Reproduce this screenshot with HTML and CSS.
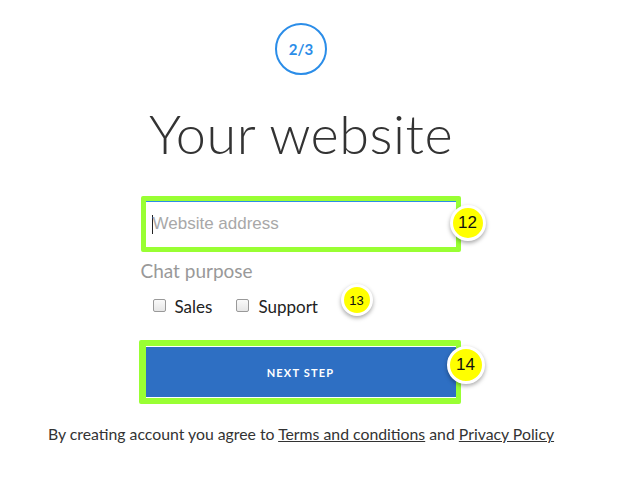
FILE: index.html
```html
<!DOCTYPE html>
<html>
<head>
<meta charset="utf-8">
<link rel="stylesheet" href="styles.css">
</head>
<body>
<div class="page">
  <div class="step">2/3</div>
  <h1 class="title">Your website</h1>
  <div class="form">
    <div class="field-wrap">
      <div class="field"><span class="caret"></span><span class="placeholder">Website address</span></div>
      <span class="badge b12">12</span>
    </div>
    <div class="label">Chat purpose</div>
    <div class="checks">
      <label class="check"><span class="box"></span>Sales</label>
      <label class="check"><span class="box"></span>Support</label>
      <span class="badge b13">13</span>
    </div>
    <div class="btn-wrap">
      <div class="btn">NEXT STEP</div>
      <span class="badge b14">14</span>
    </div>
  </div>
  <p class="terms">By creating account you agree to <a href="#">Terms and conditions</a> and <a href="#">Privacy Policy</a></p>
</div>
</body>
</html>
```
FILE: styles.css
```css
html, body { margin: 0; padding: 0; background: #fff; }
body { font-family: Lato, "Open Sans", sans-serif; color: #333; }
.page {
  width: 602px;
  display: flex;
  flex-direction: column;
  align-items: center;
  padding-top: 23px;
}
.step {
  width: 48px;
  height: 48px;
  border: 2px solid #2b8de8;
  border-radius: 50%;
  display: flex;
  align-items: center;
  justify-content: center;
  color: #2b8de8;
  font-weight: 700;
  font-size: 15px;
}
.title {
  margin: 29px 0 0;
  font-weight: 300;
  font-size: 54px;
  line-height: 60px;
  color: #333;
  letter-spacing: 0.5px;
}
.form {
  width: 320px;
  margin-top: 32px;
  margin-left: -1px;
  display: flex;
  flex-direction: column;
}
.field-wrap { position: relative; }
.field {
  border: 5px solid #99ff33;
  border-radius: 2px;
  height: 46px;
  box-sizing: content-box;
  background: #fff;
  display: flex;
  align-items: center;
  padding-left: 6px;
  box-shadow: inset 0 1px 0 #2b8de8;
}
.caret { width: 1px; height: 19px; background: #222; }
.placeholder {
  font-family: "Liberation Sans", Arial, sans-serif;
  font-size: 17px;
  color: #a8a8a8;
}
.label {
  margin-top: 7px;
  font-size: 19px;
  color: #999;
  line-height: 24px;
}
.checks {
  position: relative;
  display: flex;
  gap: 24px;
  margin-top: 11px;
  padding-left: 12px;
  height: 24px;
  align-items: center;
}
.check {
  display: flex;
  align-items: center;
  font-size: 17px;
  color: #222;
}
.box {
  width: 11px;
  height: 11px;
  border: 1px solid #999;
  border-radius: 2px;
  background: linear-gradient(#fafafa, #e6e6e6);
  margin-right: 9px;
  margin-top: -2px;
}
.btn-wrap { position: relative; margin-top: 22px; margin-left: -2px; }
.btn {
  border: 6px solid #99ff33;
  border-left-width: 7px;
  border-right-width: 5px;
  border-radius: 2px;
  height: 52px;
  background: #2e6fc3;
  box-shadow: inset 0 1px 0 #fff, inset 0 -1px 0 #fff;
  display: flex;
  align-items: center;
  justify-content: center;
  color: #fff;
  font-weight: 700;
  font-size: 11px;
  letter-spacing: 1.2px;
}
.badge {
  position: absolute;
  border-radius: 50%;
  background: #ffff00;
  border: 3px solid #fff;
  box-shadow: 0 2px 4px rgba(0,0,0,0.35);
  display: flex;
  align-items: center;
  justify-content: center;
  font-family: "Liberation Sans", Arial, sans-serif;
  color: #111;
}
.b12 { width: 30px; height: 30px; left: 309px; top: 9px; font-size: 17px; }
.b13 { width: 26px; height: 26px; left: 200px; top: -10px; font-size: 13px; }
.b14 { width: 32px; height: 32px; left: 308px; top: 6px; font-size: 17px; }
.terms {
  margin: 20px 0 0;
  font-size: 15.8px;
  color: #333;
}
.terms a { color: #333; text-decoration: underline; }
```
